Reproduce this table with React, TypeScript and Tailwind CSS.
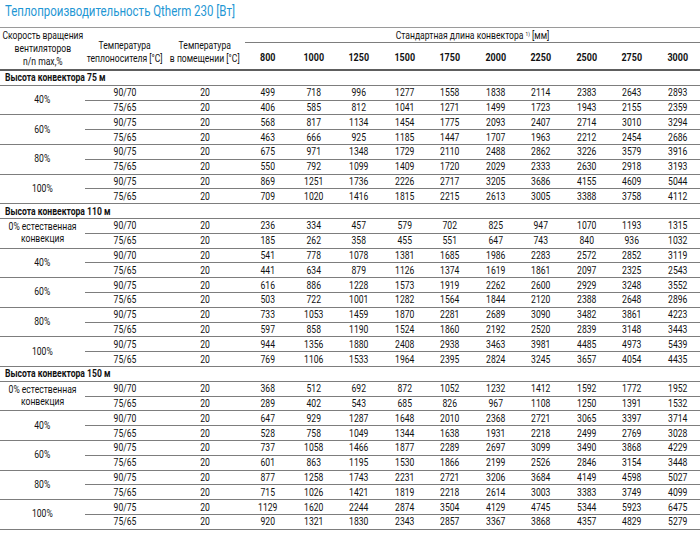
const font = {
  fontFamily: 'Roboto, "Liberation Sans", sans-serif',
};

// шрифт в оригинале узкий (condensed), поэтому текст слегка сжимаем по горизонтали
const narrow = "scale-x-[0.78]";

type Group = { speed: string[]; rows: [string, number[]][] };
type Section = { title: string; groups: Group[] };

const lengths = [800, 1000, 1250, 1500, 1750, 2000, 2250, 2500, 2750, 3000];
const natural = ["0% естественная", "конвекция"];

const sections: Section[] = [
  {
    title: "Высота конвектора 75 м",
    groups: [
      { speed: ["40%"], rows: [["90/70", [499, 718, 996, 1277, 1558, 1838, 2114, 2383, 2643, 2893]], ["75/65", [406, 585, 812, 1041, 1271, 1499, 1723, 1943, 2155, 2359]]] },
      { speed: ["60%"], rows: [["90/75", [568, 817, 1134, 1454, 1775, 2093, 2407, 2714, 3010, 3294]], ["75/65", [463, 666, 925, 1185, 1447, 1707, 1963, 2212, 2454, 2686]]] },
      { speed: ["80%"], rows: [["90/75", [675, 971, 1348, 1729, 2110, 2488, 2862, 3226, 3579, 3916]], ["75/65", [550, 792, 1099, 1409, 1720, 2029, 2333, 2630, 2918, 3193]]] },
      { speed: ["100%"], rows: [["90/75", [869, 1251, 1736, 2226, 2717, 3205, 3686, 4155, 4609, 5044]], ["75/65", [709, 1020, 1416, 1815, 2215, 2613, 3005, 3388, 3758, 4112]]] },
    ],
  },
  {
    title: "Высота конвектора 110 м",
    groups: [
      { speed: natural, rows: [["90/70", [236, 334, 457, 579, 702, 825, 947, 1070, 1193, 1315]], ["75/65", [185, 262, 358, 455, 551, 647, 743, 840, 936, 1032]]] },
      { speed: ["40%"], rows: [["90/70", [541, 778, 1078, 1381, 1685, 1986, 2283, 2572, 2852, 3119]], ["75/65", [441, 634, 879, 1126, 1374, 1619, 1861, 2097, 2325, 2543]]] },
      { speed: ["60%"], rows: [["90/75", [616, 886, 1228, 1573, 1919, 2262, 2600, 2929, 3248, 3552]], ["75/65", [503, 722, 1001, 1282, 1564, 1844, 2120, 2388, 2648, 2896]]] },
      { speed: ["80%"], rows: [["90/75", [733, 1053, 1459, 1870, 2281, 2689, 3090, 3482, 3861, 4223]], ["75/65", [597, 858, 1190, 1524, 1860, 2192, 2520, 2839, 3148, 3443]]] },
      { speed: ["100%"], rows: [["90/75", [944, 1356, 1880, 2408, 2938, 3463, 3981, 4485, 4973, 5439]], ["75/65", [769, 1106, 1533, 1964, 2395, 2824, 3245, 3657, 4054, 4435]]] },
    ],
  },
  {
    title: "Высота конвектора 150 м",
    groups: [
      { speed: natural, rows: [["90/70", [368, 512, 692, 872, 1052, 1232, 1412, 1592, 1772, 1952]], ["75/65", [289, 402, 543, 685, 826, 967, 1108, 1250, 1391, 1532]]] },
      { speed: ["40%"], rows: [["90/70", [647, 929, 1287, 1648, 2010, 2368, 2721, 3065, 3397, 3714]], ["75/65", [528, 758, 1049, 1344, 1638, 1931, 2218, 2499, 2769, 3028]]] },
      { speed: ["60%"], rows: [["90/75", [737, 1058, 1466, 1877, 2289, 2697, 3099, 3490, 3868, 4229]], ["75/65", [601, 863, 1195, 1530, 1866, 2199, 2526, 2846, 3154, 3448]]] },
      { speed: ["80%"], rows: [["90/75", [877, 1258, 1743, 2231, 2721, 3206, 3684, 4149, 4598, 5027]], ["75/65", [715, 1026, 1421, 1819, 2218, 2614, 3003, 3383, 3749, 4099]]] },
      { speed: ["100%"], rows: [["90/75", [1129, 1620, 2244, 2874, 3504, 4129, 4745, 5344, 5923, 6475]], ["75/65", [920, 1321, 1830, 2343, 2857, 3367, 3868, 4357, 4829, 5279]]] },
    ],
  },
];

function GroupRows({ group }: { group: Group }) {
  return (
    <div className="flex h-[29.6px]">
      <div className="w-[85px] shrink-0 flex items-center justify-center border-b border-[#7d7d7d]">
        <div className={`flex flex-col items-center leading-[12px] whitespace-nowrap ${narrow}`}>
          {group.speed.map((line) => (
            <span key={line}>{line}</span>
          ))}
        </div>
      </div>
      <div className="flex-1 flex flex-col">
        {group.rows.map(([temp, values]) => (
          <div key={temp} className="flex items-center h-[14.8px] border-b border-[#7d7d7d]">
            <div className={`w-[80px] text-center ${narrow}`}>{temp}</div>
            <div className={`w-[80px] text-center ${narrow}`}>20</div>
            <div className="flex-1 grid grid-cols-10">
              {values.map((v, i) => (
                <div key={i} className={`text-center ${narrow}`}>
                  {v}
                </div>
              ))}
            </div>
          </div>
        ))}
      </div>
    </div>
  );
}

export default function App() {
  return (
    <div className="w-[700px] h-[533px] bg-white text-[#111] text-[11px] leading-none overflow-hidden" style={font}>
      <div className="h-[27px] pl-[5px] pt-[4px]">
        <div className="text-[15.5px] text-[#1f97d4] whitespace-nowrap origin-left scale-x-[0.74]">
          Теплопроизводительность Qtherm 230 [Вт]
        </div>
      </div>

      {/* шапка таблицы */}
      <div className="flex h-[44px] border-t border-[#9a9a9a] border-b-2 border-b-[#5e5e5e] whitespace-nowrap">
        <div className="w-[85px] flex items-center justify-center">
          <div className={`flex flex-col items-center leading-[13px] ${narrow}`}>
            <span>Скорость вращения</span>
            <span>вентиляторов</span>
            <span>n/n max,%</span>
          </div>
        </div>
        <div className="w-[80px] flex items-center justify-center pt-[6px]">
          <div className={`flex flex-col items-center leading-[13px] ${narrow}`}>
            <span>Температура</span>
            <span>теплоносителя [°C]</span>
          </div>
        </div>
        <div className="w-[80px] flex items-center justify-center pt-[6px]">
          <div className={`flex flex-col items-center leading-[13px] ${narrow}`}>
            <span>Температура</span>
            <span>в помещении [°C]</span>
          </div>
        </div>
        <div className="flex-1 flex flex-col">
          <div className="h-[15px] border-b border-[#7d7d7d] flex items-center justify-center">
            <div className={narrow}>
              Стандартная длина конвектора <sup className="text-[6px]">1)</sup> [мм]
            </div>
          </div>
          <div className="flex-1 grid grid-cols-10 items-center pt-[3px] font-bold text-[11.5px]">
            {lengths.map((l) => (
              <div key={l} className={`text-center ${narrow}`}>
                {l}
              </div>
            ))}
          </div>
        </div>
      </div>

      {sections.map((s) => (
        <div key={s.title}>
          <div className="h-[14.8px] flex items-center pl-[5px] border-b border-[#7d7d7d]">
            <div className={`font-bold whitespace-nowrap origin-left ${narrow}`}>{s.title}</div>
          </div>
          {s.groups.map((g) => (
            <GroupRows key={g.speed.join(" ")} group={g} />
          ))}
        </div>
      ))}
    </div>
  );
}
